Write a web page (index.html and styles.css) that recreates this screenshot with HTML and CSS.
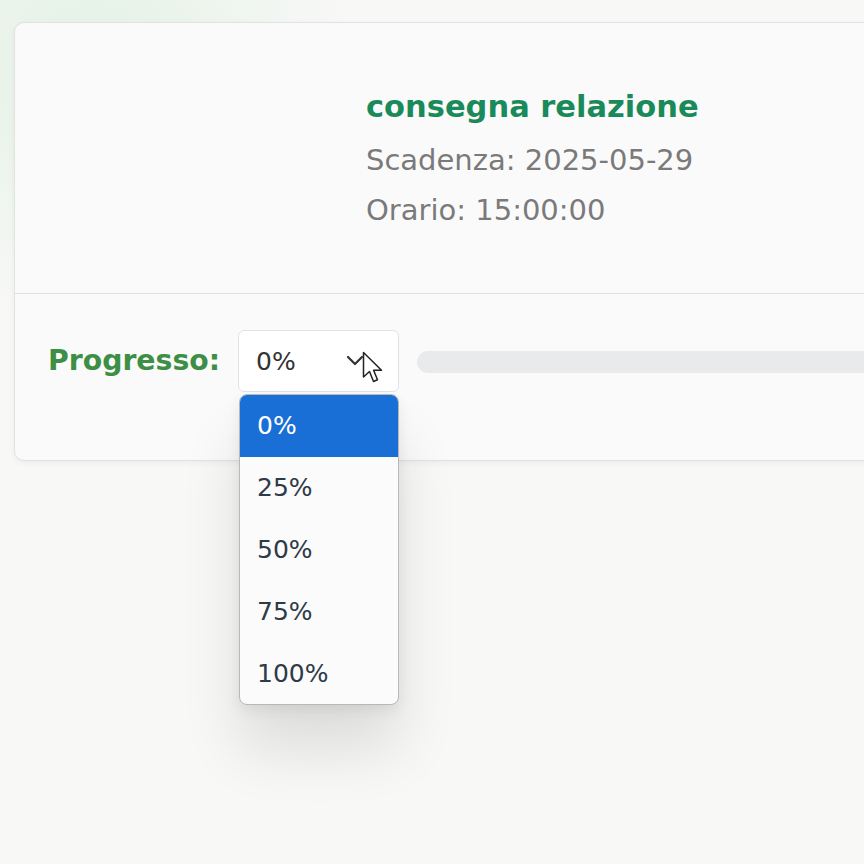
FILE: index.html
```html
<!DOCTYPE html>
<html lang="it">
<head>
<meta charset="utf-8">
<title>Task</title>
<link rel="stylesheet" href="styles.css">
</head>
<body>
<div class="page">
  <div class="card">
    <div class="card-head">
      <div class="info">
        <h2 class="title">consegna relazione</h2>
        <p class="meta">Scadenza: 2025-05-29</p>
        <p class="meta">Orario: 15:00:00</p>
      </div>
    </div>
    <div class="card-foot">
      <span class="label">Progresso:</span>
      <div class="select-wrap">
        <div class="select">
          <span>0%</span>
          <svg class="chev" width="18" height="12" viewBox="0 0 18 12"><path d="M2 2 L9 9 L16 2" fill="none" stroke="#333" stroke-width="2.2" stroke-linecap="round" stroke-linejoin="round"/></svg>
        </div>
        <svg class="cursor" width="22" height="34" viewBox="0 0 22 34"><path d="M1.5 1.5 L1.5 26 L7.5 20.5 L11.5 30.5 L15.5 28.8 L11.6 19.2 L19.5 19.2 Z" fill="#fff" stroke="#222" stroke-width="1.5" stroke-linejoin="round"/></svg>
        <ul class="menu">
          <li class="active">0%</li>
          <li>25%</li>
          <li>50%</li>
          <li>75%</li>
          <li>100%</li>
        </ul>
      </div>
      <div class="bar"><div class="fill" style="width:0%"></div></div>
    </div>
  </div>
</div>
</body>
</html>
```
FILE: styles.css
```css
html, body {
  margin: 0;
  padding: 0;
}
body {
  width: 864px;
  height: 864px;
  overflow: hidden;
  background:
    radial-gradient(ellipse 260px 250px at 90px 70px, rgba(222, 240, 224, 0.85), rgba(222, 240, 224, 0) 100%),
    #f8f8f7;
  font-family: "DejaVu Sans", "Noto Sans", sans-serif;
}
.page {
  padding: 22px 0 0 14px;
}
.card {
  width: 900px;
  background: #fafafa;
  border: 1px solid #e2e2e2;
  border-radius: 10px;
  box-shadow: 0 2px 6px rgba(0, 0, 0, 0.05);
}
.card-head {
  height: 271px;
  border-bottom: 1px solid #e0e0e0;
  display: flex;
  padding-left: 351px;
  box-sizing: border-box;
  padding-top: 68px;
}
.title {
  margin: 0 0 19px;
  font-size: 30.5px;
  line-height: 32px;
  font-weight: 700;
  color: #1b8a5a;
}
.meta {
  margin: 0 0 14px;
  font-size: 29px;
  line-height: 36px;
  color: #7a7a7a;
}
.card-foot {
  height: 166px;
  box-sizing: border-box;
  display: flex;
  align-items: flex-start;
  padding: 36px 0 0 33px;
}
.label {
  font-size: 28.3px;
  font-weight: 700;
  color: #3c8f44;
  line-height: 62px;
  margin-right: 18px;
}
.select-wrap {
  position: relative;
  width: 161px;
  margin-right: 18px;
}
.select {
  height: 62px;
  box-sizing: border-box;
  border: 1px solid #dfe3e8;
  border-radius: 6px;
  background: #fff;
  display: flex;
  align-items: center;
  justify-content: space-between;
  padding: 0 34px 0 17px;
  font-size: 25px;
  color: #333;
}
.cursor {
  position: absolute;
  left: 124px;
  top: 21px;
}
.menu {
  position: absolute;
  left: 1px;
  top: 64px;
  width: 160px;
  box-sizing: border-box;
  margin: 0;
  padding: 0;
  list-style: none;
  background: #fbfbfb;
  border: 1px solid #b8b8b8;
  border-radius: 8px;
  overflow: hidden;
  box-shadow: 0 45px 60px rgba(0, 0, 0, 0.11), 0 6px 14px rgba(0, 0, 0, 0.07);
  z-index: 2;
}
.menu li {
  height: 61.8px;
  display: flex;
  align-items: center;
  padding-left: 17px;
  font-size: 25px;
  color: #2e3a48;
}
.menu li.active {
  background: #1a6fd6;
  color: #fff;
}
.bar {
  flex: 1;
  margin-top: 21px;
  height: 22px;
  border-radius: 11px;
  background: #e8eaeb;
  overflow: hidden;
}
.fill {
  height: 100%;
  background: #3c8f44;
}
```
